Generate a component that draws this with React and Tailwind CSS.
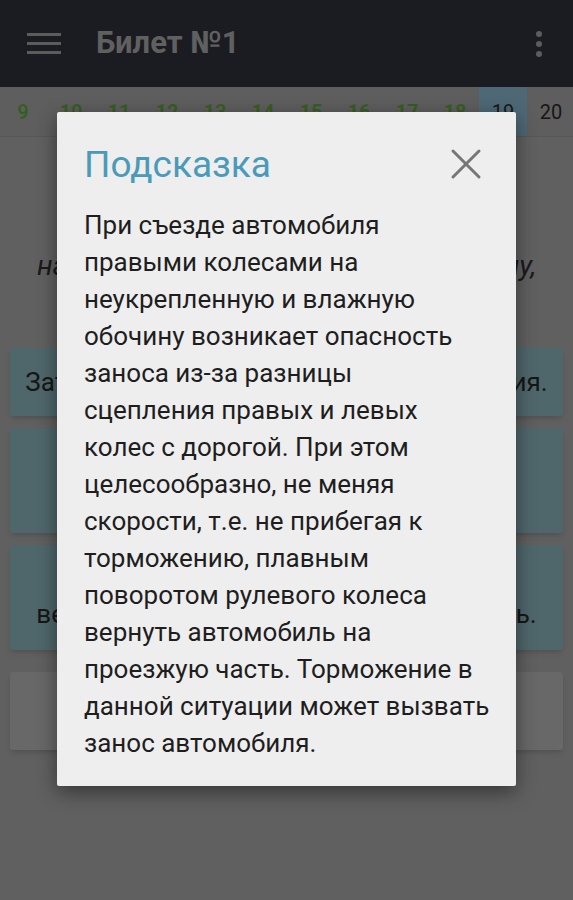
import React from 'react';

const tabs = [9, 10, 11, 12, 13, 14, 15, 16, 17, 18, 19, 20];

const hintLines = [
  'При съезде автомобиля',
  'правыми колесами на',
  'неукрепленную и влажную',
  'обочину возникает опасность',
  'заноса из-за разницы',
  'сцепления правых и левых',
  'колес с дорогой. При этом',
  'целесообразно, не меняя',
  'скорости, т.е. не прибегая к',
  'торможению, плавным',
  'поворотом рулевого колеса',
  'вернуть автомобиль на',
  'проезжую часть. Торможение в',
  'данной ситуации может вызвать',
  'занос автомобиля.',
];

const App = () => {
  return (
    <div className="relative w-[573px] h-[900px] overflow-hidden bg-[#606060]" style={{ fontFamily: 'Roboto, "Noto Sans", sans-serif' }}>
      {/* app bar */}
      <div className="h-[87px] bg-[#1b1c21] flex items-center">
        <div className="ml-[27px] w-[34px] flex flex-col gap-[6px]">
          <div className="h-[3px] bg-[#5c5c5c]"></div>
          <div className="h-[3px] bg-[#5c5c5c]"></div>
          <div className="h-[3px] bg-[#5c5c5c]"></div>
        </div>
        <div className="ml-[35px] text-[31px] font-bold text-[#606060]">Билет №1</div>
        <div className="ml-auto mr-[31px] flex flex-col gap-[4px]">
          <div className="w-[6px] h-[6px] rounded-full bg-[#5c5c5c]"></div>
          <div className="w-[6px] h-[6px] rounded-full bg-[#5c5c5c]"></div>
          <div className="w-[6px] h-[6px] rounded-full bg-[#5c5c5c]"></div>
        </div>
      </div>

      {/* ticket tabs */}
      <div className="h-[50px] bg-[#5e5e5e] border-b border-[#575757] flex ml-[-1px]">
        {tabs.map(n => (
          <div
            key={n}
            className={
              n === 19
                ? 'w-[48px] shrink-0 flex items-center justify-center text-[20px] bg-[#4e6876] text-[#161616]'
                : n === 20
                ? 'w-[48px] shrink-0 flex items-center justify-center text-[20px] text-[#161616]'
                : 'w-[48px] shrink-0 flex items-center justify-center text-[20px] font-semibold text-[#355f22]'
            }
          >
            {n}
          </div>
        ))}
      </div>

      {/* question */}
      <div className="px-[10px]">
        <div className="pt-[110px] text-center italic text-[28px] text-[#1a1a1a] leading-[37px] whitespace-nowrap">
          на неукрепленную и влажную обочину,
        </div>

        <div className="mt-[64px] flex flex-col gap-[12px]">
          <div className="h-[68px] rounded-[3px] bg-[#4f676b] shadow-md flex items-center justify-center text-[26px] text-[#161616] whitespace-nowrap">
            Затормозить без изменения направления.
          </div>
          <div className="h-[105px] rounded-[3px] bg-[#4f676b] shadow-md flex items-center justify-center text-[26px] text-[#161616] text-center px-6">
            Затормозить и плавно вернуться на дорогу.
          </div>
          <div className="h-[105px] rounded-[3px] bg-[#4f676b] shadow-md flex items-end justify-center pb-[16px] text-[26px] text-[#161616]">
            вернуть автомобиль на проезжую часть.
          </div>
          <div className="mt-[10px] h-[78px] rounded-[3px] bg-[#686868] shadow-md"></div>
        </div>
      </div>

      {/* hint dialog */}
      <div className="absolute left-[57px] top-[112px] w-[459px] h-[674px] bg-[#eeeeee] rounded-[2px] shadow-[0_6px_20px_rgba(0,0,0,0.45)] pl-[27px] pr-[30px]">
        <div className="flex items-center justify-between pt-[29px]">
          <div className="text-[37px] leading-[48px] text-[#4a9ab9]">Подсказка</div>
          <svg width="34" height="34" viewBox="0 0 34 34" className="mr-[3px] mt-[-2px]">
            <path d="M4 4 L30 30 M30 4 L4 30" stroke="#767676" strokeWidth="3" strokeLinecap="round" />
          </svg>
        </div>
        <div className="mt-[18px] text-[26px] leading-[37px] text-[#1e1e1e] whitespace-nowrap">
          {hintLines.map((line, i) => (
            <div key={i}>{line}</div>
          ))}
        </div>
      </div>
    </div>
  );
};

export default App;
